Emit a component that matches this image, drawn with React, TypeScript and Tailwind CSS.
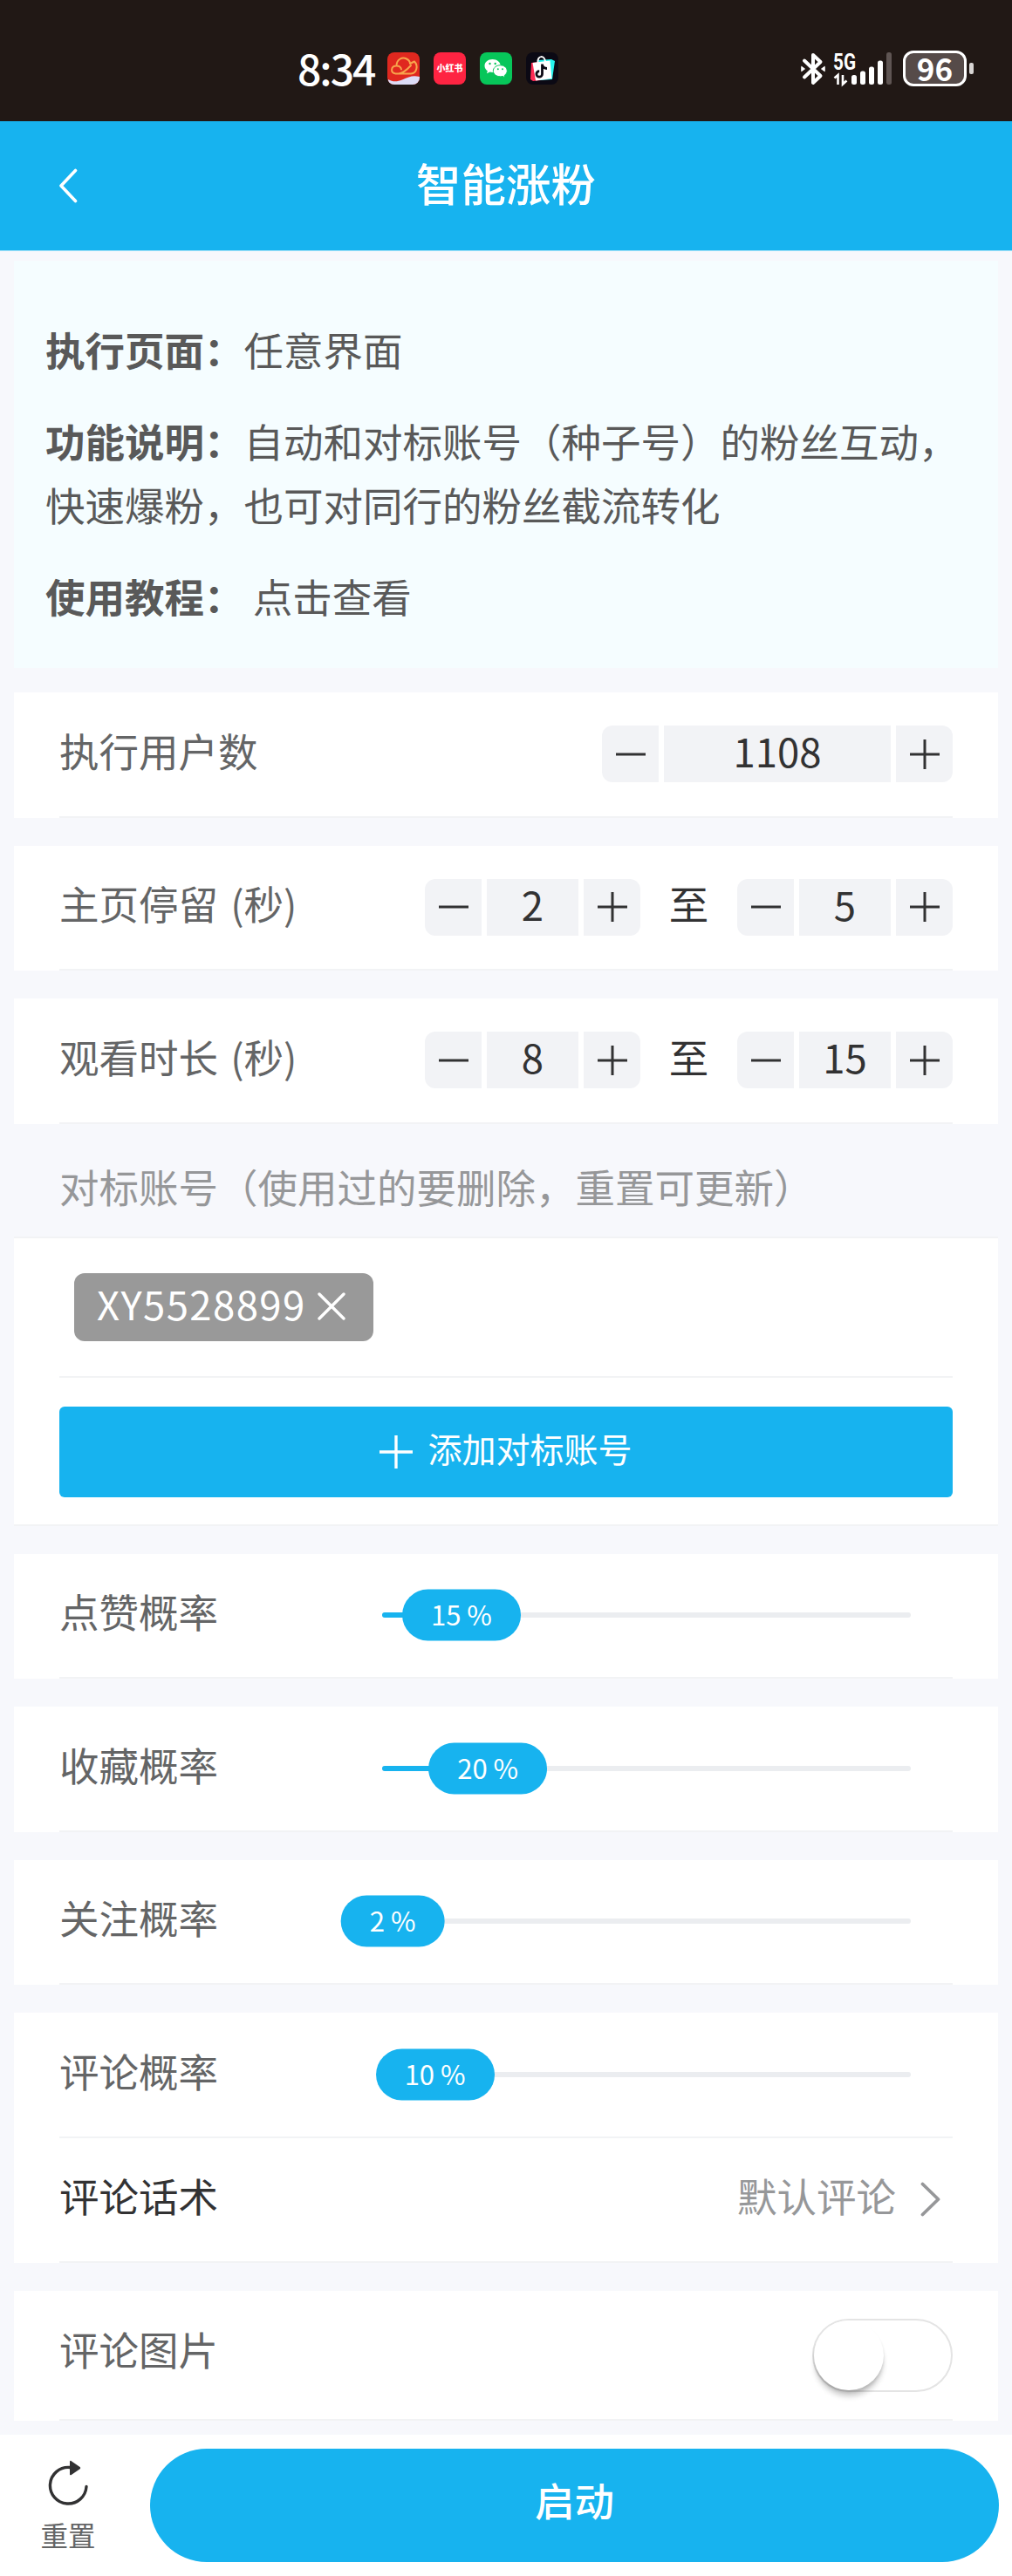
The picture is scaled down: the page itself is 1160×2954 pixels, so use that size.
import React, { useState } from 'react';

const FONT = "font-['Noto_Sans_CJK_SC',sans-serif]";

interface IconProps {
  className?: string;
}

const ChevronLeft = ({ className }: IconProps) => (
  <svg className={className} viewBox="0 0 24 40" fill="none" stroke="currentColor" strokeWidth="3.6" strokeLinecap="round" strokeLinejoin="round">
    <path d="M20.5 2.5 4 20l16.5 17.5" />
  </svg>
);

const ChevronRight = ({ className }: IconProps) => (
  <svg className={className} viewBox="0 0 24 40" fill="none" stroke="currentColor" strokeWidth="3.8" strokeLinecap="round" strokeLinejoin="round">
    <path d="M2.5 2.5 20.5 20 2.5 37.5" />
  </svg>
);

const MinusIcon = () => (
  <svg className="w-[34px] h-[34px]" viewBox="0 0 34 34" stroke="currentColor" strokeWidth="3">
    <path d="M0 17h34" />
  </svg>
);

const PlusIcon = ({ className = 'w-[34px] h-[34px]' }: IconProps) => (
  <svg className={className} viewBox="0 0 34 34" stroke="currentColor" strokeWidth="3">
    <path d="M0 17h34M17 0v34" />
  </svg>
);

const CloseIcon = () => (
  <svg className="w-[32px] h-[32px]" viewBox="0 0 32 32" fill="none" stroke="currentColor" strokeWidth="3.4" strokeLinecap="round">
    <path d="M2 2 30 30M30 2 2 30" />
  </svg>
);

const ResetIcon = () => (
  <svg className="w-[48px] h-[52px]" viewBox="0 0 48 52" fill="none">
    <path d="M26 8.500A20.800 20.800 0 1 0 45 30.500" stroke="#323233" strokeWidth="3.400" strokeLinecap="round" />
    <path d="M26 2c0-1 1-1.500 1.800-.8l9.800 6.700c.8.6.8 1.700 0 2.300l-9.800 6.800c-.8.6-1.800.2-1.800-.8Z" fill="#323233" />
  </svg>
);

const CloudAppIcon = () => (
  <svg className="w-[37px] h-[37px]" viewBox="0 0 37 37">
    <clipPath id="cloud-clip"><rect width="37" height="37" rx="8" /></clipPath>
    <g clipPath="url(#cloud-clip)">
      <rect width="37" height="37" fill="#e0281f" />
      <path d="M1 31c5 3 10 3 16 .5C25 28 29 26 37 28v9H0Z" fill="#dcdcf6" />
      <path d="M13 24.500H9.500C3 23.500 4 15.500 10.500 15.500 10.500 8 17 5 22 7.500c3 1.500 4 3.500 4 5.500L31 10.500c4.500 4.500 3 13.500-4 14H13c6-1 10-5 14-9.500M10.500 15.500c3 0 5 1.500 5.500 4" fill="none" stroke="#f7a44c" strokeWidth="2" strokeLinecap="round" strokeLinejoin="round" />
    </g>
  </svg>
);

const WeChatIcon = () => (
  <svg className="w-[37px] h-[37px]" viewBox="0 0 37 37">
    <rect width="37" height="37" rx="8" fill="#07c65a" />
    <path d="M14.500 8C9.300 8 5.500 11.300 5.500 15.500c0 2.500 1.300 4.500 3.300 5.800L8 24.300l3.500-1.800c1 .3 2 .4 3 .4 5.300 0 9.200-3.200 9.200-7.400S19.800 8 14.500 8Z" fill="#fff" />
    <path d="M23.500 14.800c-4.600 0-8.200 2.900-8.200 6.500s3.600 6.500 8.200 6.500c.9 0 1.800-.1 2.600-.4l2.900 1.500-.7-2.500c1.800-1.200 3-3 3-5.100 0-3.600-3.300-6.500-7.800-6.500Z" fill="#fff" stroke="#07c65a" strokeWidth="1" />
    <g fill="#07c65a">
      <circle cx="11.500" cy="13" r="1.200" />
      <circle cx="17.700" cy="13" r="1.200" />
      <circle cx="20.800" cy="19.300" r="1" />
      <circle cx="26" cy="19.300" r="1" />
    </g>
  </svg>
);

const ShopIcon = () => (
  <svg className="w-[37px] h-[37px]" viewBox="0 0 37 37">
    <rect width="37" height="37" rx="8" fill="#0b0914" />
    <path d="m6 12 18-2 2 21-18 2-3-2Z" fill="#fe2c55" />
    <path d="m14 9 15-1 4 2-3 21-14 1Z" fill="#25f4ee" />
    <path d="m7.500 12 20-2.500 2 20.500L11 32.500Z" fill="#fff" />
    <path d="M13.500 12c-1-9 8-9 8.500-1" fill="none" stroke="#fff" strokeWidth="2" />
    <path d="M18.500 13.500v11.500a3.300 3.300 0 1 1-3.300-3.400M18.500 14c.5 3 2.500 4.500 5.500 4.500" fill="none" stroke="#0b0914" strokeWidth="2.800" />
  </svg>
);

const BluetoothIcon = () => (
  <svg className="w-[28px] h-[40px]" viewBox="0 0 28 40" fill="none" stroke="#fff" strokeWidth="4" strokeLinejoin="round" strokeLinecap="round">
    <path d="M4 10.500 22.500 28 14 36V4l8.500 8L4 29.500" />
    <path d="m1 17.500 3.500 2.500L1 22.500ZM27 17.500 23.500 20l3.500 2.500Z" fill="#fff" strokeWidth="1" />
  </svg>
);

const SignalIcon = () => (
  <svg className="w-[68px] h-[40px] overflow-visible" viewBox="0 0 68 40">
    <text x="0" y="20.500" fontSize="25" fontWeight="700" fill="#fff" textLength="26" lengthAdjust="spacingAndGlyphs" fontFamily="Roboto, sans-serif">5G</text>
    <path d="M1.500 30.500 5.500 27v11M11 27v10.500l4.500-4" fill="none" stroke="#fff" strokeWidth="2.600" />
    <g fill="#fff">
      <rect x="21" y="27" width="6" height="11" rx="2.500" />
      <rect x="31" y="22.500" width="6" height="15.500" rx="2.500" />
      <rect x="41" y="17.500" width="6" height="20.500" rx="2.500" />
      <rect x="51" y="10.500" width="6" height="27.500" rx="2.500" />
    </g>
    <rect x="61" y="1" width="6" height="37" rx="2.500" fill="#5f5553" />
  </svg>
);

const StatusBar = () => (
  <div className="h-[139px] bg-[#211815] flex items-start justify-between pl-[341px] pr-[44px] pt-[58px] text-white">
    <div className="flex items-center h-[41px]">
      <span className="w-[103px] text-[48px] leading-[41px] font-medium tracking-[-2px] pb-[3px]">8:34</span>
      <div className="flex gap-[16px]">
        <CloudAppIcon />
        <div className="w-[37px] h-[37px] rounded-[8px] bg-[#fe2442] text-center text-[10px] leading-[36px] font-black whitespace-nowrap">小红书</div>
        <WeChatIcon />
        <ShopIcon />
      </div>
    </div>
    <div className="flex items-center h-[41px]">
      <BluetoothIcon />
      <div className="ml-[9px]">
        <SignalIcon />
      </div>
      <div className="ml-[12px] w-[73px] h-[41px] rounded-[12px] border-[3px] border-white bg-[#564b49] flex items-center justify-center text-[35px] leading-[35px] font-bold pb-[3px]">96</div>
      <div className="ml-[3px] w-[5px] h-[13px] rounded-[2px] bg-[#d8d5d4]" />
    </div>
  </div>
);

const NavBar = () => (
  <header className="h-[149px] bg-[#17b3ef] border-b border-[#a5e2f8] grid grid-cols-3 items-center text-white">
    <div className="pl-[66px]">
      <ChevronLeft className="w-[24px] h-[40px]" />
    </div>
    <h1 className="text-center text-[51.500px] leading-[60px] font-medium pb-[9px] whitespace-nowrap">智能涨粉</h1>
  </header>
);

interface StepperProps {
  value: number;
  wide?: boolean;
}

const Stepper: React.FC<StepperProps> = ({ value, wide }) => {
  const [count, setCount] = useState<number>(value);

  return (
    <div className="flex gap-[6px] h-[65px] text-[#323233]">
      <button onClick={() => setCount(count - 1)} className="w-[65px] rounded-l-[12px] bg-[#f2f3f6] flex items-center justify-center">
        <MinusIcon />
      </button>
      <div className={`${wide ? 'w-[260px]' : 'w-[105px]'} bg-[#f2f3f6] text-center text-[45.500px] leading-[56px]`}>{count}</div>
      <button onClick={() => setCount(count + 1)} className="w-[65px] rounded-r-[12px] bg-[#f2f3f6] flex items-center justify-center">
        <PlusIcon />
      </button>
    </div>
  );
};

interface RowProps {
  label: string;
  dark?: boolean;
  height?: string;
  labelPad?: string;
  children: React.ReactNode;
}

const Row: React.FC<RowProps> = ({ label, dark, height = 'h-[143.5px]', labelPad = 'pb-[10px]', children }) => (
  <div className={`${height} mx-[52px] flex items-center justify-between border-b-2 border-[#f2f3f5]`}>
    <span className={`text-[45.500px] leading-[60px] ${labelPad} [word-spacing:4px] whitespace-nowrap ${dark ? 'text-[#323233]' : 'text-[#646566]'}`}>{label}</span>
    {children}
  </div>
);

const Card = ({ children, className = '' }: { children: React.ReactNode; className?: string }) => (
  <section className={`bg-white ${className}`}>{children}</section>
);

const RangeRow = ({ label, from, to }: { label: string; from: number; to: number }) => (
  <Card>
    <Row label={label}>
      <div className="flex items-center">
        <Stepper value={from} />
        <span className="w-[111px] text-center text-[45.500px] leading-[60px] pb-[10px] text-[#323233]">至</span>
        <Stepper value={to} />
      </div>
    </Row>
  </Card>
);

const Slider = ({ value }: { value: number }) => (
  <div className="relative w-[606px] h-[6px] mr-[48px] rounded-full bg-[#ebedf0]">
    <div className="h-full rounded-full bg-[#17b3ef]" style={{ width: `${value}%` }} />
    <div
      className="absolute top-1/2 -translate-x-1/2 -translate-y-1/2 h-[59px] px-[33px] rounded-full bg-[#17b3ef] text-white text-[31px] leading-[56px] whitespace-nowrap"
      style={{ left: `${value}%` }}
    >
      {value} %
    </div>
  </div>
);

const probabilities = [
  { label: '点赞概率', value: 15 },
  { label: '收藏概率', value: 20 },
  { label: '关注概率', value: 2 },
];

const App: React.FC = () => {
  return (
    <div className={`${FONT} w-[1160px] h-[2954px] overflow-hidden bg-[#f7f8fc] flex flex-col`} lang="zh-CN">
      <StatusBar />
      <NavBar />

      <main className="flex-1 px-[16px] pt-[11px] flex flex-col">
        <section className="h-[467px] bg-[#f5fdff] px-[36px] pt-[65px] text-[45.500px] leading-[73px] text-[#595959] space-y-[32px]">
          <p><b>执行页面：</b>任意界面</p>
          <p><b>功能说明：</b>自动和对标账号（种子号）的粉丝互动，<br />快速爆粉，也可对同行的粉丝截流转化</p>
          <p><b>使用教程：</b> 点击查看</p>
        </section>

        <div className="mt-[28px] flex flex-col gap-[32px]">
          <Card>
            <Row label="执行用户数">
              <Stepper value={1108} wide />
            </Row>
          </Card>
          <RangeRow label="主页停留 (秒)" from={2} to={5} />
          <RangeRow label="观看时长 (秒)" from={8} to={15} />
        </div>

        <h2 className="h-[129px] pl-[52px] pt-[41px] text-[45.500px] leading-[60px] text-[#969799]">对标账号（使用过的要删除，重置可更新）</h2>
        <Card className="h-[332px] border-y-2 border-[#f2f3f5]">
          <div className="mx-[52px] h-[160px] pt-[40px] pl-[17px] border-b-2 border-[#f2f3f5]">
            <div className="w-[343px] h-[78px] rounded-[12px] bg-[#999999] text-white flex items-center justify-between pl-[26px] pr-[32px]">
              <span className="text-[45.500px] leading-[60px] tracking-[1.4px] pb-[10px] whitespace-nowrap">XY5528899</span>
              <div className="pb-[2px]">
                <CloseIcon />
              </div>
            </div>
          </div>
          <button className="mx-[52px] mt-[33px] w-[1024px] h-[104px] rounded-[6px] bg-[#17b3ef] text-white flex items-center justify-center gap-[17px]">
            <PlusIcon className="w-[38px] h-[38px]" />
            <span className="text-[39px] leading-[50px] pb-[9px]">添加对标账号</span>
          </button>
        </Card>

        <div className="mt-[32px] flex flex-col gap-[32px]">
          {probabilities.map((item) => (
            <Card key={item.label}>
              <Row label={item.label}>
                <Slider value={item.value} />
              </Row>
            </Card>
          ))}
          <Card>
            <Row label="评论概率">
              <Slider value={10} />
            </Row>
            <Row label="评论话术" dark>
              <div className="flex items-center gap-[28px] pr-[13px] text-[#969799]">
                <span className="text-[45.500px] leading-[60px] pb-[10px]">默认评论</span>
                <ChevronRight className="w-[24px] h-[40px]" />
              </div>
            </Row>
          </Card>
          <Card>
            <Row label="评论图片" height="h-[149px]" labelPad="pb-[16px]">
              <div className="w-[161px] h-[84px] rounded-full border-2 border-[#e4e4e4] bg-white">
                <div className="w-[80px] h-[80px] rounded-full bg-white shadow-[0_8px_6px_-1px_rgba(0,0,0,0.2),0_3px_3px_rgba(0,0,0,0.1)]" />
              </div>
            </Row>
          </Card>
        </div>
      </main>

      <footer className="h-[162px] bg-white pl-[16px] pr-[15px] py-[16px] flex">
        <button className="w-[124px] mr-[32px] flex flex-col items-center pt-[13px]">
          <ResetIcon />
          <span className="mt-[7px] text-[31.500px] leading-[52px] text-[#646566]">重置</span>
        </button>
        <button className="flex-1 h-[130px] rounded-full bg-[#17b3ef] text-white text-[45.500px] leading-[60px] font-medium pb-[14px]">启动</button>
      </footer>
    </div>
  );
};

export default App;
